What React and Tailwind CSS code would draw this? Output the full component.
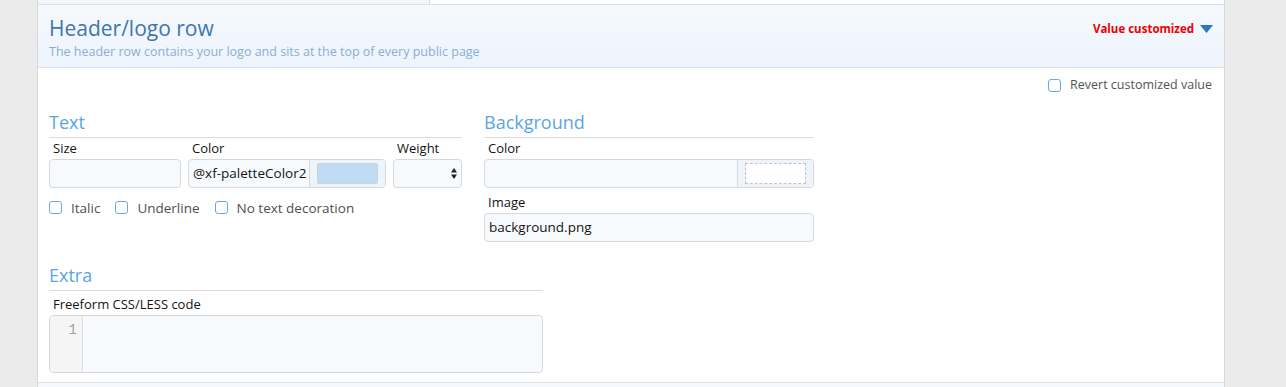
const Checkbox = ({ label, className = '' }) => (
    <label className={`flex items-center gap-[9px] ${className}`}>
        <span className="w-[13px] h-[13px] rounded-[3px] border border-[#6aa7e0] bg-white shrink-0" />
        <span>{label}</span>
    </label>
);

const SectionTitle = ({ children }) => (
    <h3 className="text-[18px] leading-[24px] text-[#5ba4e8] border-b border-[#dcdcdc] pb-[3px]">{children}</h3>
);

const FieldLabel = ({ children }) => (
    <div className="text-[13px] leading-[18px] text-[#141414] px-[4px] pt-[1px] pb-[2px]">{children}</div>
);

const inputBox = 'h-[29px] rounded-[4px] border border-[#d8d8d8] bg-[#f7fafd]';

export default function App() {
    return (
        <div
            className="w-[1286px] h-[387px] bg-[#ebebeb] flex overflow-hidden"
            style={{ fontFamily: '"Open Sans", "Noto Sans", sans-serif' }}
        >
            <div className="w-[37px] shrink-0" />
            <div className="w-[1188px] shrink-0 bg-white border-x border-[#d8d8d8] flex flex-col">
                {/* strip above the header */}
                <div className="h-[4px] flex shrink-0">
                    <div className="w-[392px] bg-[#f5f5f5] border-r border-[#dcdcdc]" />
                    <div className="flex-1 bg-white" />
                </div>

                {/* header row */}
                <div className="h-[64px] shrink-0 border-y border-[#dbe1e8] bg-gradient-to-b from-[#f5f9fd] to-[#edf4fc] flex justify-between items-start px-[11px]">
                    <div className="pt-[10px]">
                        <h2 className="text-[21px] leading-[26px] text-[#3e76ad]">Header/logo row</h2>
                        <p className="text-[12.5px] leading-[18px] text-[#8aafd6] mt-[2px]">
                            The header row contains your logo and sits at the top of every public page
                        </p>
                    </div>
                    <div className="flex items-center gap-[6px] pt-[15px]">
                        <span className="text-[11.5px] font-bold text-[#f00000]">Value customized</span>
                        <svg width="13" height="8" viewBox="0 0 13 8">
                            <path d="M0 0 L13 0 L6.5 8 Z" fill="#2a77bd" />
                        </svg>
                    </div>
                </div>

                {/* body */}
                <div className="flex-1 px-[11px] text-[12px] text-[#505050]">
                    <div className="flex justify-end pt-[8px] pr-[1px] text-[12.5px] text-[#545454]">
                        <Checkbox label="Revert customized value" className="gap-[8px]" />
                    </div>

                    <div className="flex gap-[22px] mt-[15px]">
                        <div className="w-[413px]">
                            <SectionTitle>Text</SectionTitle>
                            <div className="flex gap-[7px]">
                                <div className="w-[132px]">
                                    <FieldLabel>Size</FieldLabel>
                                    <div className={inputBox} />
                                </div>
                                <div className="w-[198px]">
                                    <FieldLabel>Color</FieldLabel>
                                    <div className={`${inputBox} flex overflow-hidden`}>
                                        <div className="flex-1 flex items-center pl-[4px] text-[13.5px] text-[#141414] overflow-hidden whitespace-nowrap">
                                            @xf-paletteColor2
                                        </div>
                                        <div className="w-[76px] shrink-0 border-l border-[#d8d8d8] bg-[#eef4fb] flex items-center justify-center">
                                            <div className="w-[61px] h-[21px] rounded-[2px] border border-[#c8d4de] bg-[#bfdcf4]" />
                                        </div>
                                    </div>
                                </div>
                                <div className="w-[69px]">
                                    <FieldLabel>Weight</FieldLabel>
                                    <div className={`${inputBox} flex items-center justify-end pr-[4px]`}>
                                        <svg width="6" height="11" viewBox="0 0 6 11">
                                            <path d="M0 4.5 L3 0 L6 4.5 Z M0 6.5 L6 6.5 L3 11 Z" fill="#222" />
                                        </svg>
                                    </div>
                                </div>
                            </div>
                            <div className="flex gap-[15px] mt-[10px] text-[13.5px] text-[#505050]">
                                <Checkbox label="Italic" />
                                <Checkbox label="Underline" />
                                <Checkbox label="No text decoration" />
                            </div>
                        </div>

                        <div className="w-[330px]">
                            <SectionTitle>Background</SectionTitle>
                            <FieldLabel>Color</FieldLabel>
                            <div className={`${inputBox} flex overflow-hidden`}>
                                <div className="flex-1" />
                                <div className="w-[76px] border-l border-[#d8d8d8] bg-[#eef4fb] flex items-center justify-center">
                                    <div className="w-[61px] h-[21px] border border-dashed border-[#c4c4c4] bg-white" />
                                </div>
                            </div>
                            <div className="mt-[4px]">
                                <FieldLabel>Image</FieldLabel>
                            </div>
                            <div className={`${inputBox} flex items-center pl-[4px] text-[13.5px] text-[#141414]`}>
                                background.png
                            </div>
                        </div>
                    </div>

                    <div className="w-[494px] mt-[21px]">
                        <SectionTitle>Extra</SectionTitle>
                        <div className="pt-[3px]">
                            <FieldLabel>Freeform CSS/LESS code</FieldLabel>
                        </div>
                        <div className="h-[58px] rounded-[4px] border border-[#d8d8d8] bg-[#f7fafd] flex overflow-hidden">
                            <div className="w-[33px] bg-[#f5f5f5] border-r border-[#dddddd] text-right pr-[5px] pt-[6px] text-[14px] leading-[17px] text-[#a0a0a0] font-['Liberation_Mono',monospace]">
                                1
                            </div>
                            <div className="flex-1" />
                        </div>
                    </div>
                </div>

                <div className="h-[5px] shrink-0 border-t border-[#dbe1e8] bg-[#f5f9fd]" />
            </div>
        </div>
    );
}
